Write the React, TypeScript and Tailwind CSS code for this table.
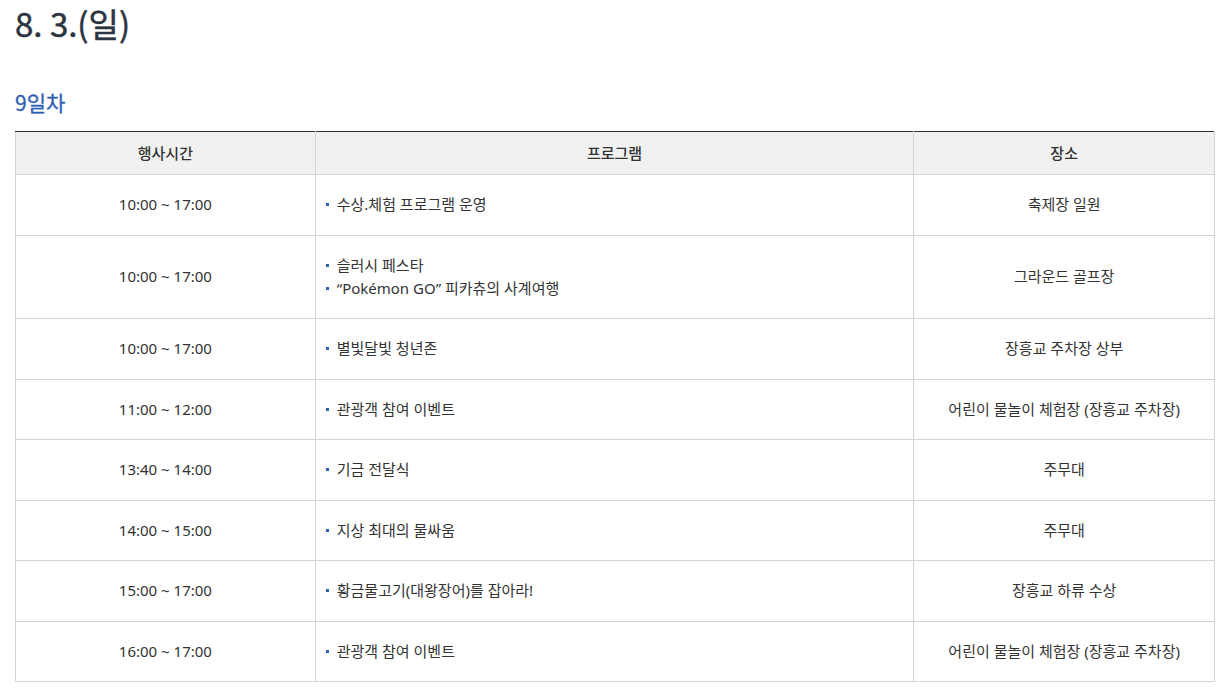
import React from 'react';

interface Row {
  time: string;
  programs: string[];
  place: string;
}

const rows: Row[] = [
  { time: '10:00 ~ 17:00', programs: ['수상.체험 프로그램 운영'], place: '축제장 일원' },
  { time: '10:00 ~ 17:00', programs: ['슬러시 페스타', '“Pokémon GO” 피카츄의 사계여행'], place: '그라운드 골프장' },
  { time: '10:00 ~ 17:00', programs: ['별빛달빛 청년존'], place: '장흥교 주차장 상부' },
  { time: '11:00 ~ 12:00', programs: ['관광객 참여 이벤트'], place: '어린이 물놀이 체험장 (장흥교 주차장)' },
  { time: '13:40 ~ 14:00', programs: ['기금 전달식'], place: '주무대' },
  { time: '14:00 ~ 15:00', programs: ['지상 최대의 물싸움'], place: '주무대' },
  { time: '15:00 ~ 17:00', programs: ['황금물고기(대왕장어)를 잡아라!'], place: '장흥교 하류 수상' },
  { time: '16:00 ~ 17:00', programs: ['관광객 참여 이벤트'], place: '어린이 물놀이 체험장 (장흥교 주차장)' },
];

const App: React.FC = () => {
  return (
    <div className="bg-white min-h-screen px-[15px] text-[#333]" style={{ fontFamily: '"Noto Sans", "Noto Sans CJK KR", sans-serif' }}>
      <h2
        className="text-[33px] leading-[46px] font-normal text-[#2b3440] [-webkit-text-stroke:0.5px_#2b3440]"
        style={{ fontFamily: '"Noto Sans CJK KR", "Noto Sans", sans-serif' }}
      >
        8. 3.(일)
      </h2>
      <h3
        className="text-[21px] leading-[28px] font-normal text-[#2f5fb3] [-webkit-text-stroke:0.3px_#2f5fb3] mt-[42px] mb-[15px]"
        style={{ fontFamily: '"Noto Sans CJK KR", "Noto Sans", sans-serif' }}
      >
        9일차
      </h3>
      <table className="w-[1200px] border-collapse text-[15px] leading-[23px]">
        <colgroup>
          <col className="w-[300px]" />
          <col className="w-[599px]" />
          <col className="w-[301px]" />
        </colgroup>
        <thead>
          <tr className="bg-[#f1f1f1]">
            <th className="font-medium py-[10px] leading-[22px] border border-[#d4d4d4] border-t-[#333] text-center">행사시간</th>
            <th className="font-medium py-[10px] leading-[22px] border border-[#d4d4d4] border-t-[#333] text-center">프로그램</th>
            <th className="font-medium py-[10px] leading-[22px] border border-[#d4d4d4] border-t-[#333] text-center">장소</th>
          </tr>
        </thead>
        <tbody>
          {rows.map((r, i) => (
            <tr key={i}>
              <td className="border border-[#d4d4d4] py-[18.25px] text-center">{r.time}</td>
              <td className="border border-[#d4d4d4] py-[18.25px] pl-[10px]">
                {r.programs.map((p, j) => (
                  <div key={j} className="flex items-center">
                    <span className="w-[3px] h-[3px] bg-[#2f5fb3] mr-[8px] shrink-0" />
                    <span>{p}</span>
                  </div>
                ))}
              </td>
              <td className="border border-[#d4d4d4] py-[18.25px] text-center">{r.place}</td>
            </tr>
          ))}
        </tbody>
      </table>
    </div>
  );
};

export default App;
